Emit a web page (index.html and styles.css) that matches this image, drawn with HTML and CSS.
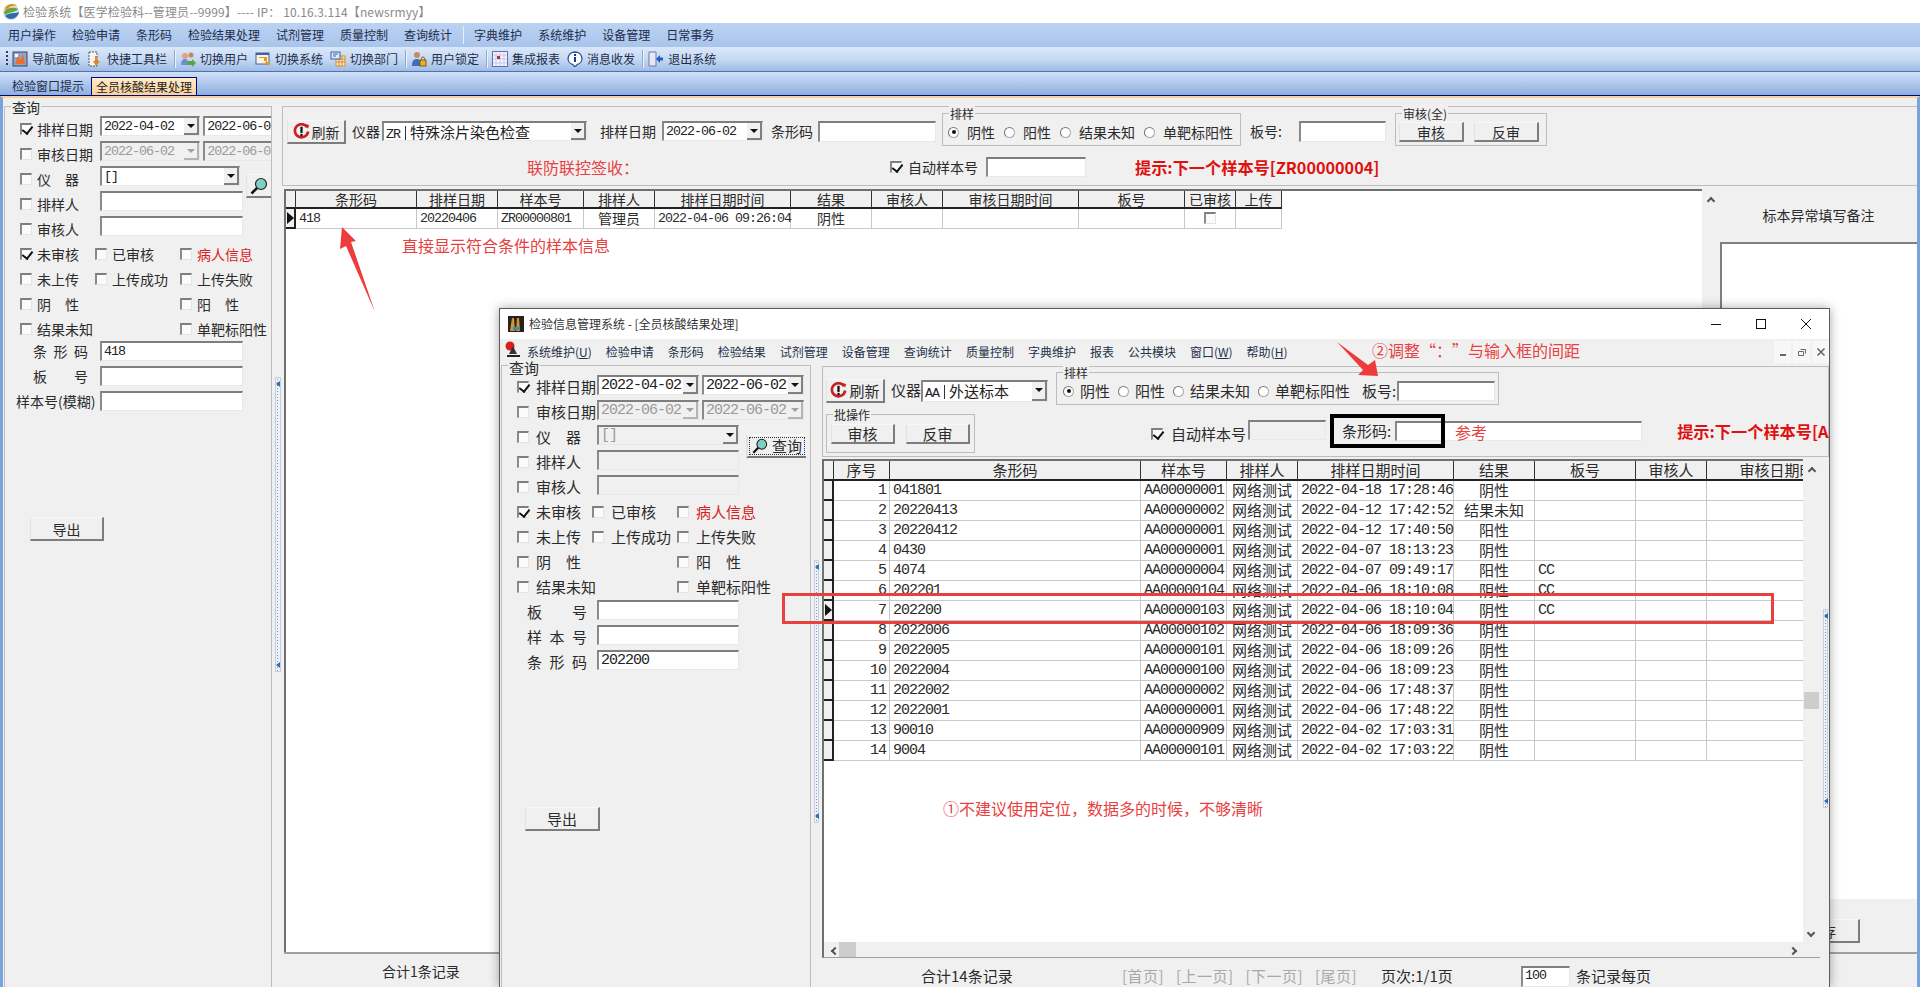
FILE: index.html
```html
<!DOCTYPE html>
<html lang="zh-CN">
<head>
<meta charset="utf-8">
<title>检验系统</title>
<link rel="stylesheet" href="styles.css">
</head>
<body>
<div class="app">
  <div class="titlebar">
    <svg class="logo" viewBox="0 0 18 18" width="18" height="18"><circle cx="9" cy="9" r="8" fill="#d9dee0"/><path d="M3 5C6 0 13 0 15 3 11 2 7 3 4 7z" fill="#e8891c"/><path d="M2 9C5 4 12 4 16 6 14 10 8 8 3 12z" fill="#6aa632"/><path d="M3 13C7 9 13 11 17 9 16 15 8 19 3 13z" fill="#2a6db5"/></svg>
    <span class="title-text">检验系统【医学检验科--管理员--9999】---- IP： 10.16.3.114【newsrmyy】</span>
  </div>
  <nav class="menubar">
    <span>用户操作</span><span>检验申请</span><span>条形码</span><span>检验结果处理</span><span>试剂管理</span><span>质量控制</span><span>查询统计</span><i class="menu-sep"></i><span>字典维护</span><span>系统维护</span><span>设备管理</span><span>日常事务</span>
  </nav>
  <div class="toolbar">
    <i class="grip"></i>
    <div class="tool"><svg viewBox="0 0 16 16" width="16" height="16"><rect x="1" y="1" width="14" height="14" fill="#8aa6d0" stroke="#445"/><path d="M3 13 6 4l2 5 3-6 2 10z" fill="#e8702a"/><rect x="3" y="3" width="3" height="3" fill="#fff"/></svg><span>导航面板</span></div>
    <div class="tool"><svg viewBox="0 0 16 16" width="16" height="16"><rect x="2" y="1" width="8" height="14" fill="#f5f5f5" stroke="#555" stroke-dasharray="2 1"/><path d="M10 5v5h3l-4 5-3-5h2V5z" fill="#e8841c"/></svg><span>快捷工具栏</span></div>
    <i class="tool-sep"></i>
    <div class="tool"><svg viewBox="0 0 16 16" width="16" height="16"><circle cx="5" cy="5" r="3" fill="#e3a27c"/><circle cx="11" cy="4" r="2.5" fill="#c8885c"/><path d="M1 14c0-5 2-6 4-6s4 2 4 6z" fill="#6f8fc8"/><path d="M8 10h4V8l4 4-4 4v-2H8z" fill="#5aa83a"/></svg><span>切换用户</span></div>
    <div class="tool"><svg viewBox="0 0 16 16" width="16" height="16"><rect x="1" y="2" width="13" height="11" fill="#fbf3e0" stroke="#3a64a8"/><rect x="1" y="2" width="13" height="2" fill="#3a64a8"/><path d="M4 7h5v3h2l-1 2 3 3 2-4h-3V6H4z" fill="#e89a1c"/></svg><span>切换系统</span></div>
    <div class="tool"><svg viewBox="0 0 16 16" width="16" height="16"><rect x="6" y="5" width="9" height="10" fill="#fbe9c8" stroke="#d88a2c"/><path d="M6 8h9M6 11h9M9 5v10M12 5v10" stroke="#d88a2c"/><rect x="1" y="1" width="9" height="7" fill="#dfeaf8" stroke="#3a64a8"/><path d="M3 3h5M3 5h3" stroke="#3a64a8"/></svg><span>切换部门</span></div>
    <i class="tool-sep"></i>
    <div class="tool"><svg viewBox="0 0 16 16" width="16" height="16"><circle cx="6" cy="4" r="3" fill="#c98a5c"/><path d="M1 15c0-6 2-7 5-7s5 2 5 7z" fill="#3f6fb5"/><rect x="9" y="9" width="6" height="6" fill="#e8b02c" stroke="#8a5a10"/><path d="M10.500 9V7.500a1.500 1.500 0 0 1 3 0V9" fill="none" stroke="#8a5a10"/></svg><span>用户锁定</span></div>
    <i class="tool-sep"></i>
    <div class="tool"><svg viewBox="0 0 16 16" width="16" height="16"><rect x=".5" y=".5" width="15" height="15" fill="#f4f4fb" stroke="#6a6ab8"/><path d="M1 4h14M1 8h14M1 12h14M4 1v14M8 1v14M12 1v14" stroke="#c8c8e8"/><rect x="5" y="5" width="3" height="3" fill="#b83030"/></svg><span>集成报表</span></div>
    <div class="tool"><svg viewBox="0 0 16 16" width="16" height="16"><path d="M8 1a7 6.500 0 0 1 2 12.700L8 16l-2-2.300A7 6.500 0 0 1 8 1z" fill="#fff" stroke="#2a50a0" stroke-width="1.300"/><rect x="7" y="6" width="2" height="5" fill="#123a90"/><rect x="7" y="3" width="2" height="2" fill="#123a90"/></svg><span>消息收发</span></div>
    <i class="tool-sep"></i>
    <div class="tool"><svg viewBox="0 0 16 16" width="16" height="16"><path d="M1 1h7v14H1z" fill="#e6e8f4" stroke="#6c7ab0"/><path d="M8 8l4-4v2.500h3v3h-3V12z" fill="#1f5fc8"/></svg><span>退出系统</span></div>
  </div>
  <div class="tabstrip">
    <div class="tab">检验窗口提示</div>
    <div class="tab tab-on">全员核酸结果处理</div>
  </div>

  <div class="workspace">
    <section class="group query">
      <span class="legend">查询</span>
      <div class="row"><i class="cb on"></i><span class="lab">排样日期</span><div class="sunk date"><span class="val">2022-04-02</span><i class="arrow"></i></div><div class="sunk date2 gap3"><span class="val">2022-06-02</span></div></div>
      <div class="row"><i class="cb"></i><span class="lab">审核日期</span><div class="sunk date off"><span class="val">2022-06-02</span><i class="arrow dim"></i></div><div class="sunk date2 gap3 off"><span class="val">2022-06-02</span></div></div>
      <div class="row"><i class="cb"></i><span class="lab"><span class="just">仪 器</span></span><div class="sunk wide"><span class="val">[]</span><i class="arrow"></i></div><div class="btn search"><svg viewBox="0 0 18 18" width="18" height="18"><circle cx="11" cy="7" r="5.500" fill="#7fd0c4" stroke="#222" stroke-width="1.200"/><path d="M7 11 1.500 16.500" stroke="#111" stroke-width="2.500"/></svg></div></div>
      <div class="row"><i class="cb"></i><span class="lab">排样人</span><div class="sunk wide"></div></div>
      <div class="row"><i class="cb"></i><span class="lab">审核人</span><div class="sunk wide"></div></div>
      <div class="row"><span class="cell-a"><i class="cb on"></i>未审核</span><span class="cell-b"><i class="cb"></i>已审核</span><span class="cell-c red"><i class="cb"></i>病人信息</span></div>
      <div class="row"><span class="cell-a"><i class="cb"></i>未上传</span><span class="cell-b"><i class="cb"></i>上传成功</span><span class="cell-c"><i class="cb"></i>上传失败</span></div>
      <div class="row"><span class="cell-ab"><i class="cb"></i><span class="just">阴 性</span></span><span class="cell-c"><i class="cb"></i><span class="just">阳 性</span></span></div>
      <div class="row"><span class="cell-ab"><i class="cb"></i>结果未知</span><span class="cell-c"><i class="cb"></i>单靶标阳性</span></div>
      <div class="row row-spaced"><span class="pre">条 形 码</span><div class="sunk wide"><span class="val">418</span></div></div>
      <div class="row row-spaced"><span class="pre">板 号</span><div class="sunk wide"></div></div>
      <div class="row row-spaced"><span class="pre-wide">样本号(模糊)</span><div class="sunk wide"></div></div>
      <div class="btn export">导出</div>
    </section>
    <div class="splitter"><div class="strip"><i class="tick"></i><i class="tick"></i></div></div>

    <div class="content">
      <div class="panel">
        <div class="bar bar-one">
          <div class="btn refresh"><svg viewBox="0 0 18 18" width="17" height="17"><path d="M15 4.500A7 7 0 1 0 16 9" fill="none" stroke="#cc1f1f" stroke-width="2.800"/><path d="M13 1l4 1-1 4z" fill="#cc1f1f"/><rect x="7.800" y="4" width="2.400" height="6.500" fill="#111"/><rect x="7.800" y="11.500" width="2.400" height="2.400" fill="#111"/></svg>刷新</div>
          <span class="t ml6 w28">仪器</span>
          <div class="sunk combo-ins ml2"><span class="val">ZR<em class="pipe"></em><b class="cjk">特殊涂片染色检查</b></span><i class="arrow"></i></div>
          <span class="t ml13">排样日期</span>
          <div class="sunk date ml6 slim"><span class="val">2022-06-02</span><i class="arrow"></i></div>
          <span class="t ml8">条形码</span>
          <div class="sunk barcode ml5"></div>
          <div class="group radios ml6">
            <span class="legend small">排样</span>
            <label><i class="radio on"></i>阴性</label><label><i class="radio"></i>阳性</label><label><i class="radio"></i>结果未知</label><label><i class="radio"></i>单靶标阳性</label>
          </div>
          <span class="t ml9">板号:</span>
          <div class="sunk plate ml17"></div>
          <div class="group actions ml9">
            <span class="legend small">审核(全)</span>
            <div class="btn act">审核</div><div class="btn act">反审</div>
          </div>
        </div>
        <div class="bar bar-two">
          <span class="note-inline">联防联控签收：</span>
          <span class="autobox"><i class="cb on"></i>自动样本号</span>
          <div class="sunk auto"></div>
          <span class="hint">提示:下一个样本号[ZR00000004]</span>
        </div>
      </div>
      <div class="grid-row">
        <div class="grid">
          <table class="tbl tbl-main">
            <colgroup><col><col><col><col><col><col><col><col><col><col><col><col></colgroup>
            <thead><tr><th></th><th>条形码</th><th>排样日期</th><th>样本号</th><th>排样人</th><th>排样日期时间</th><th>结果</th><th>审核人</th><th>审核日期时间</th><th>板号</th><th>已审核</th><th>上传</th></tr></thead>
            <tbody><tr><td class="ind cur"></td><td class="m">418</td><td class="m">20220406</td><td class="m">ZR00000801</td><td class="c">管理员</td><td class="m">2022-04-06 09:26:04</td><td class="c">阴性</td><td></td><td></td><td></td><td class="c"><i class="cb plain"></i></td><td></td></tr></tbody>
          </table>
        </div>
        <div class="vbar"><i class="chev up"></i></div>
        <aside class="remark">
          <div class="remark-head">标本异常填写备注</div>
          <div class="remark-body"></div>
          <div class="remark-foot"><div class="btn save">保存</div></div>
        </aside>
      </div>
      <div class="status">合计1条记录</div>
    </div>
  </div>
</div>

<div class="win">
  <div class="win-title">
    <svg viewBox="0 0 16 16" width="16" height="16"><rect width="16" height="16" fill="#2c2118"/><path d="M2 15 4 2h2l1 13zM8 15l1-13h2l1 13z" fill="#c9973a"/><rect x="5" y="11" width="7" height="3" fill="#3f8fa8"/></svg>
    <span>检验信息管理系统 - [全员核酸结果处理]</span>
    <div class="win-ctrls">
      <svg viewBox="0 0 12 12" width="12" height="12"><path d="M1 6.500h10" stroke="#111"/></svg>
      <svg viewBox="0 0 12 12" width="12" height="12"><rect x="1.500" y="1.500" width="9" height="9" fill="none" stroke="#111"/></svg>
      <svg viewBox="0 0 12 12" width="12" height="12"><path d="M1 1l10 10M11 1 1 11" stroke="#111"/></svg>
    </div>
  </div>
  <nav class="win-menu">
    <svg class="menu-icon" viewBox="0 0 16 18" width="16" height="18"><circle cx="5" cy="6" r="4.500" fill="#d81e1e"/><path d="M4 14 8 6l4 8z" fill="#333"/><rect x="2" y="15" width="13" height="2" fill="#222"/></svg>
    <span class="first">系统维护(<u>U</u>)</span><span>检验申请</span><span>条形码</span><span>检验结果</span><span>试剂管理</span><span>设备管理</span><span>查询统计</span><span>质量控制</span><span>字典维护</span><span>报表</span><span>公共模块</span><span>窗口(<u>W</u>)</span><span>帮助(<u>H</u>)</span>
    <div class="mdi">
      <i class="mdi-btn"><svg viewBox="0 0 10 10" width="10" height="10"><rect x="2" y="7" width="6" height="2" fill="#667"/></svg></i>
      <i class="mdi-btn"><svg viewBox="0 0 10 10" width="10" height="10"><path d="M3.500 2.500h5v4M1.500 4.500h5v4h-5z" fill="none" stroke="#667"/></svg></i>
      <i class="mdi-btn"><svg viewBox="0 0 10 10" width="10" height="10"><path d="M1.500 1.500l7 7M8.500 1.500l-7 7" stroke="#667" stroke-width="1.600"/></svg></i>
    </div>
  </nav>
  <div class="win-body">
    <section class="group query sub-query">
      <span class="legend">查询</span>
      <div class="row"><i class="cb on"></i><span class="lab">排样日期</span><div class="sunk date"><span class="val">2022-04-02</span><i class="arrow"></i></div><div class="sunk date gap3"><span class="val">2022-06-02</span><i class="arrow"></i></div></div>
      <div class="row"><i class="cb"></i><span class="lab">审核日期</span><div class="sunk date off"><span class="val">2022-06-02</span><i class="arrow dim"></i></div><div class="sunk date gap3 off"><span class="val">2022-06-02</span><i class="arrow dim"></i></div></div>
      <div class="row"><i class="cb"></i><span class="lab"><span class="just">仪 器</span></span><div class="sunk wide off"><span class="val">[]</span><i class="arrow"></i></div><div class="btn search query-btn"><span class="focus"><svg viewBox="0 0 18 18" width="16" height="16"><circle cx="11" cy="7" r="5.500" fill="#7fd0c4" stroke="#222" stroke-width="1.200"/><path d="M7 11 1.500 16.500" stroke="#111" stroke-width="2.500"/></svg>查询</span></div></div>
      <div class="row"><i class="cb"></i><span class="lab">排样人</span><div class="sunk wide off"></div></div>
      <div class="row"><i class="cb"></i><span class="lab">审核人</span><div class="sunk wide off"></div></div>
      <div class="row"><span class="cell-a"><i class="cb on"></i>未审核</span><span class="cell-b"><i class="cb"></i>已审核</span><span class="cell-c red"><i class="cb"></i>病人信息</span></div>
      <div class="row"><span class="cell-a"><i class="cb"></i>未上传</span><span class="cell-b"><i class="cb"></i>上传成功</span><span class="cell-c"><i class="cb"></i>上传失败</span></div>
      <div class="row"><span class="cell-ab"><i class="cb"></i><span class="just">阴 性</span></span><span class="cell-c"><i class="cb"></i><span class="just">阳 性</span></span></div>
      <div class="row"><span class="cell-ab"><i class="cb"></i>结果未知</span><span class="cell-c"><i class="cb"></i>单靶标阳性</span></div>
      <div class="row row-spaced"><span class="pre">板 号</span><div class="sunk wide"></div></div>
      <div class="row row-spaced"><span class="pre">样 本 号</span><div class="sunk wide"></div></div>
      <div class="row row-spaced"><span class="pre">条 形 码</span><div class="sunk wide"><span class="val">202200</span></div></div>
      <div class="btn export">导出</div>
    </section>
    <div class="splitter sub-splitter"><div class="strip"><i class="tick"></i><i class="tick"></i></div></div>
    <div class="content sub-content">
      <div class="panel sub-panel">
        <div class="bar bar-one">
          <div class="btn refresh"><svg viewBox="0 0 18 18" width="17" height="17"><path d="M15 4.500A7 7 0 1 0 16 9" fill="none" stroke="#cc1f1f" stroke-width="2.800"/><path d="M13 1l4 1-1 4z" fill="#cc1f1f"/><rect x="7.800" y="4" width="2.400" height="6.500" fill="#111"/><rect x="7.800" y="11.500" width="2.400" height="2.400" fill="#111"/></svg>刷新</div>
          <span class="t ml6 w30">仪器</span>
          <div class="sunk combo-aa"><span class="val">AA<em class="pipe"></em><b class="cjk">外送标本</b></span><i class="arrow"></i></div>
          <div class="group radios sub-radios ml8">
            <span class="legend small">排样</span>
            <label><i class="radio on"></i>阴性</label><label><i class="radio"></i>阳性</label><label><i class="radio"></i>结果未知</label><label><i class="radio"></i>单靶标阳性</label>
            <span class="plate-label">板号:</span>
            <div class="sunk plate-in"></div>
          </div>
        </div>
        <div class="bar bar-batch">
          <div class="group batch">
            <span class="legend small">批操作</span>
            <div class="btn act">审核</div><div class="btn act">反审</div>
          </div>
          <span class="autobox"><i class="cb on"></i>自动样本号</span>
          <div class="sunk auto off"></div>
          <span class="t bc-label">条形码:</span>
          <div class="sunk bc-in"></div>
          <span class="hint">提示:下一个样本号[AA00000002]</span>
        </div>
      </div>
      <div class="grid-row">
        <div class="grid-wrap">
          <div class="grid-main">
            <div class="grid">
              <table class="tbl tbl-sub">
                <colgroup><col><col><col><col><col><col><col><col><col><col></colgroup>
                <thead><tr><th></th><th>序号</th><th>条形码</th><th>样本号</th><th>排样人</th><th>排样日期时间</th><th>结果</th><th>板号</th><th>审核人</th><th>审核日期时间</th></tr></thead>
                <tbody>
                  <tr><td class="ind"></td><td class="n">1</td><td class="m">041801</td><td class="m">AA00000001</td><td class="c">网络测试</td><td class="m">2022-04-18 17:28:46</td><td class="c">阴性</td><td></td><td></td><td></td></tr>
                  <tr><td class="ind"></td><td class="n">2</td><td class="m">20220413</td><td class="m">AA00000002</td><td class="c">网络测试</td><td class="m">2022-04-12 17:42:52</td><td class="c">结果未知</td><td></td><td></td><td></td></tr>
                  <tr><td class="ind"></td><td class="n">3</td><td class="m">20220412</td><td class="m">AA00000001</td><td class="c">网络测试</td><td class="m">2022-04-12 17:40:50</td><td class="c">阳性</td><td></td><td></td><td></td></tr>
                  <tr><td class="ind"></td><td class="n">4</td><td class="m">0430</td><td class="m">AA00000001</td><td class="c">网络测试</td><td class="m">2022-04-07 18:13:23</td><td class="c">阴性</td><td></td><td></td><td></td></tr>
                  <tr><td class="ind"></td><td class="n">5</td><td class="m">4074</td><td class="m">AA00000004</td><td class="c">网络测试</td><td class="m">2022-04-07 09:49:17</td><td class="c">阳性</td><td class="m">CC</td><td></td><td></td></tr>
                  <tr><td class="ind"></td><td class="n">6</td><td class="m">202201</td><td class="m">AA00000104</td><td class="c">网络测试</td><td class="m">2022-04-06 18:10:08</td><td class="c">阴性</td><td class="m">CC</td><td></td><td></td></tr>
                  <tr><td class="ind cur"></td><td class="n">7</td><td class="m">202200</td><td class="m">AA00000103</td><td class="c">网络测试</td><td class="m">2022-04-06 18:10:04</td><td class="c">阴性</td><td class="m">CC</td><td></td><td></td></tr>
                  <tr><td class="ind"></td><td class="n">8</td><td class="m">2022006</td><td class="m">AA00000102</td><td class="c">网络测试</td><td class="m">2022-04-06 18:09:36</td><td class="c">阴性</td><td></td><td></td><td></td></tr>
                  <tr><td class="ind"></td><td class="n">9</td><td class="m">2022005</td><td class="m">AA00000101</td><td class="c">网络测试</td><td class="m">2022-04-06 18:09:26</td><td class="c">阴性</td><td></td><td></td><td></td></tr>
                  <tr><td class="ind"></td><td class="n">10</td><td class="m">2022004</td><td class="m">AA00000100</td><td class="c">网络测试</td><td class="m">2022-04-06 18:09:23</td><td class="c">阴性</td><td></td><td></td><td></td></tr>
                  <tr><td class="ind"></td><td class="n">11</td><td class="m">2022002</td><td class="m">AA00000002</td><td class="c">网络测试</td><td class="m">2022-04-06 17:48:37</td><td class="c">阴性</td><td></td><td></td><td></td></tr>
                  <tr><td class="ind"></td><td class="n">12</td><td class="m">2022001</td><td class="m">AA00000001</td><td class="c">网络测试</td><td class="m">2022-04-06 17:48:22</td><td class="c">阴性</td><td></td><td></td><td></td></tr>
                  <tr><td class="ind"></td><td class="n">13</td><td class="m">90010</td><td class="m">AA00000909</td><td class="c">网络测试</td><td class="m">2022-04-02 17:03:31</td><td class="c">阴性</td><td></td><td></td><td></td></tr>
                  <tr><td class="ind"></td><td class="n">14</td><td class="m">9004</td><td class="m">AA00000101</td><td class="c">网络测试</td><td class="m">2022-04-02 17:03:22</td><td class="c">阴性</td><td></td><td></td><td></td></tr>
                </tbody>
              </table>
            </div>
            <div class="vbar sub-vbar"><i class="chev up"></i><i class="thumb-v"></i><i class="chev down"></i></div>
          </div>
          <div class="hbar"><i class="chev left"></i><i class="thumb-h"></i><i class="chev right"></i></div>
        </div>
        <div class="splitter right-splitter"><div class="strip"><i class="tick"></i><i class="tick"></i></div></div>
      </div>
      <div class="status sub-status">
        <span class="total">合计14条记录</span>
        <span class="pager">[首页] [上一页] [下一页] [尾页]</span>
        <span class="pageno">页次:1/1页</span>
        <div class="sunk perpage"><span class="val">100</span></div>
        <span class="perlabel">条记录每页</span>
      </div>
    </div>
  </div>
</div>

<svg class="mark" viewBox="0 0 1920 987" width="1920" height="987">
  <polygon points="342,227 356,241 351,242 375,312 346,246 340,249" fill="#ee3b3b"/>
  <polygon points="1337,342 1368,365 1375,360 1378,376 1358,375 1363,370" fill="#ee3b3b"/>
</svg>
<div class="redbox"></div>
<div class="blackbox"></div>
<span class="note n-direct">直接显示符合条件的样本信息</span>
<span class="note n-gap">②调整“：”与输入框的间距</span>
<span class="note n-ref">参考</span>
<span class="note n-pos">①不建议使用定位，数据多的时候，不够清晰</span>
</body>
</html>
```
FILE: styles.css
```css
* { box-sizing: border-box; }
html, body { margin: 0; height: 100%; overflow: hidden; }
body {
  position: relative;
  width: 1920px;
  height: 987px;
  background: #f0f0f0;
  color: #2b2b2b;
  font: 14px/20px "Noto Sans CJK SC", "Liberation Sans", sans-serif;
  text-spacing-trim: space-all;
}
i, em, b { font-style: normal; font-weight: normal; }

/* ---------- main window chrome ---------- */
.app { display: flex; flex-direction: column; height: 987px; }
.titlebar {
  display: flex; align-items: center; gap: 3px;
  height: 23px; padding-left: 2px;
  background: #fff; color: #8a8a8a; font-size: 12px;
}
.title-text { letter-spacing: .12px; }
.menubar {
  display: flex; align-items: center; gap: 16px;
  height: 24px; padding-left: 8px;
  background: linear-gradient(#bcd2f1, #a9c4ec);
  color: #1d2c4c; font-size: 12px;
}
.menu-sep { width: 1px; height: 18px; margin: 0 -6px 0 -5px; background: #e6eefa; }
.toolbar {
  display: flex; align-items: center; gap: 7px;
  height: 25px; padding-left: 6px;
  background: linear-gradient(#dbe8fa, #c4d7f2 55%, #9fbbe6);
  border-bottom: 1px solid #4f74ad;
  color: #1d2c4c; font-size: 12px;
}
.grip { width: 2px; height: 16px; margin-right: -3px; background: repeating-linear-gradient(#2b3f66 0 2px, transparent 2px 4px); }
.tool { display: flex; align-items: center; gap: 4px; }
.tool-sep { width: 1px; height: 18px; margin-right: -2px; background: #8fa8cf; box-shadow: 1px 0 #eef4fd; }
.tabstrip {
  display: flex; align-items: flex-end;
  height: 24px; padding-left: 2px;
  background: linear-gradient(#d0e0f8, #8fafdf);
  border-bottom: 1px solid #000c6e;
  font-size: 12px; color: #1d2c4c;
}
.tab { height: 18px; padding: 0 7px 0 10px; line-height: 18px; }
.tab-on {
  padding: 0 4px;
  background: linear-gradient(#ffeccd, #fdd198);
  border: 1px solid #000c6e; border-bottom: 0;
  color: #222; line-height: 17px;
}
.workspace {
  display: flex; flex: 1; min-height: 0;
  border-top: 2px solid #f4d2a4;
  border-left: 3px solid #7aa3dd; border-right: 3px solid #7aa3dd;
}

/* ---------- shared controls ---------- */
.group { position: relative; border: 1px solid #bdbdbd; }
.legend {
  position: absolute; top: -8px; left: 6px;
  padding: 0 1px; background: #f0f0f0; line-height: 16px;
}
.legend.small { top: -8px; font-size: 12px; }
.sunk {
  display: flex; height: 20px; overflow: hidden;
  background: #fff; color: #222;
  border-style: solid; border-width: 2px 1px 1px 2px;
  border-color: #7e7e7e #e8e8e8 #e8e8e8 #8a8a8a;
  font: 13.33px/17px "Liberation Mono", "Noto Sans CJK SC", monospace;
  letter-spacing: -1px;
}
.sunk .val { flex: 1; min-width: 0; padding-left: 2px; white-space: nowrap; }
.sunk.off { background: #f0f0f0; color: #9a9a9a; }
.arrow {
  position: relative; flex: none; width: 15px;
  background: #f0f0f0;
  border-right: 2px solid #808080; border-bottom: 2px solid #808080;
}
.arrow::after {
  content: ""; position: absolute; left: 3px; top: 6px;
  border: 4px solid transparent; border-top: 4px solid #111; border-bottom: 0;
}
.arrow.dim { border-color: #b4b4b4; }
.arrow.dim::after { border-top-color: #a0a0a0; }
.btn {
  display: flex; align-items: center; justify-content: center;
  background: #f0f0f0;
  border-style: solid; border-width: 1px 2px 2px 1px;
  border-color: #f7f7f7 #7d7d7d #7d7d7d #e2e2e2;
}
.cb {
  display: inline-block; position: relative; flex: none;
  width: 12px; height: 12px; margin-right: 5px;
  background: #fbfbfb;
  border-style: solid; border-width: 2px 1px 1px 2px;
  border-color: #7e7e7e #e4e4e4 #e4e4e4 #8a8a8a;
}
.cb.on::after {
  content: ""; position: absolute; left: 2px; top: -1px;
  width: 5px; height: 8px;
  border: solid #111; border-width: 0 2px 2px 0;
  transform: rotate(38deg);
}
.radio {
  display: inline-block; position: relative; flex: none;
  width: 11px; height: 11px; margin-right: 8px;
  border-radius: 50%; background: #fff;
  border: 1px solid #a8a8a8; border-left-color: #777; border-top-color: #777;
}
.radio.on::after {
  content: ""; position: absolute; left: 2.500px; top: 2.500px;
  width: 4px; height: 4px; border-radius: 50%; background: #111;
}
.red { color: #d81e1e; }
.just { display: inline-block; width: 42px; text-align-last: justify; }

/* ---------- query form ---------- */
.query {
  flex: none; width: 268px; margin: 8px 0 0 1px;
  padding: 9px 0 0 15px;
  border-bottom: 0;
  font-size: 14px;
}
.row { display: flex; align-items: center; height: 25px; white-space: nowrap; }
.row > .sunk { margin-top: -5px; }
.lab { width: 63px; flex: none; }
.cell-a, .cell-b, .cell-c, .cell-ab { display: flex; align-items: center; flex: none; }
.cell-a { width: 75px; }
.cell-b { width: 85px; }
.cell-ab { width: 160px; }
.date { width: 102px; }
.date2 { width: 69px; border-right: 0; }
.gap3 { margin-left: 3px; }
.wide { width: 143px; }
.search { flex: none; align-self: flex-start; width: 25px; height: 24px; margin: 8px 0 0 6px; border-right: 0; }
.row-spaced .pre {
  width: 55px; margin: 0 12px 0 13px; margin-top: -5px;
  text-align-last: justify; flex: none;
}
.row-spaced .pre-wide { width: 84px; margin: -5px 0 0 -4px; flex: none; }
.export { width: 74px; height: 24px; margin: 101px 0 0 10px; }

.splitter { flex: none; width: 6px; margin: 0 1px 0 3px; }
.strip {
  display: flex; flex-direction: column; justify-content: space-between; align-items: center;
  height: 295px; margin-top: 279px; padding: 3px 0;
  background: #eef3fa radial-gradient(#7e93b5 .6px, transparent .8px) 0 0 / 3px 3px;
  border: 1px solid #c5cfdd;
}
.tick { width: 0; height: 0; border: 3px solid transparent; border-right: 4px solid #2d6fb0; border-left: 0; }

/* ---------- content ---------- */
.content { display: flex; flex-direction: column; flex: 1; min-width: 0; }
.panel {
  flex: none; height: 80px; margin-top: 8px;
  border: 1px solid #bdbdbd; border-right: 0;
  padding: 6px 0 0 4px;
}
.bar { display: flex; align-items: flex-start; white-space: nowrap; }
.bar-one { height: 33px; }
.bar .t { margin-top: 8px; flex: none; }
.bar > .sunk { margin-top: 8px; flex: none; }
.refresh { width: 59px; height: 24px; margin-top: 7px; gap: 2px; flex: none; }
.ml2 { margin-left: 2px; } .ml5 { margin-left: 5px !important; } .ml6 { margin-left: 6px; }
.ml7 { margin-left: 7px; } .ml8 { margin-left: 8px; } .ml9 { margin-left: 9px; }
.ml11 { margin-left: 11px; } .ml13 { margin-left: 13px; } .ml17 { margin-left: 17px; }
.w28 { width: 28px; } .w30 { width: 30px; }
.combo-ins { width: 205px; }
.date.slim { width: 101px; }
.barcode { width: 118px; height: 21px; }
.plate { width: 87px; height: 21px; }
.pipe { display: inline-block; width: 1px; height: 14px; margin: 0 4px 0 5px; background: #333; vertical-align: -2px; }
.cjk { font: 15px/17px "Noto Sans CJK SC", sans-serif; letter-spacing: 0; }
.radios {
  display: flex; align-items: center; gap: 9px; flex: none;
  width: 299px; height: 33px; padding: 5px 0 0 5px;
}
.radios label { display: flex; align-items: center; }
.actions {
  display: flex; gap: 10px; flex: none;
  width: 152px; height: 33px; padding: 8px 0 0 3px;
}
.act { width: 65px; height: 20px; }
.bar-two { height: 20px; margin-top: 11px; align-items: center; }
.note-inline { margin-left: 240px; width: 113px; font-size: 16px; color: #e8403f; flex: none; }
.autobox { display: flex; align-items: center; margin-left: 250px; flex: none; }
.autobox .cb { margin-right: 6px; }
.auto { width: 100px; margin: 0 0 0 8px !important; }
.hint {
  margin-left: 49px; flex: none;
  color: #e01010; font: bold 16.2px/20px "Noto Sans CJK SC", sans-serif;
}

/* ---------- grid ---------- */
.grid-row { display: flex; flex: none; height: 763px; margin-top: 3px; }
.grid {
  flex: none; width: 1418px; margin-left: 2px; overflow: hidden;
  background: #fff;
  border-top: 2px solid #707070; border-left: 2px solid #707070;
}
.tbl { table-layout: fixed; border-collapse: separate; border-spacing: 0; width: 0; background: #fff; }
.tbl th {
  height: 18px; padding: 0;
  background: #f0f0f0; font-weight: normal; line-height: 16px; white-space: nowrap;
  border-right: 1px solid #333; border-bottom: 2px solid #222;
}
.tbl td {
  height: 19px; padding: 0; white-space: nowrap; line-height: 16px;
  border-right: 1px solid #c8c8c8; border-bottom: 1px solid #c8c8c8;
}
.tbl .m { padding-left: 3px; font: 13.33px/16px "Liberation Mono", monospace; letter-spacing: -1px; }
.tbl .c { padding-bottom: 2px; text-align: center; }
.tbl .n { padding-right: 3px; text-align: right; font: 15px/16px "Liberation Mono", monospace; letter-spacing: -1px; }
.tbl .ind {
  position: relative; background: #f0f0f0;
  border-right: 2px solid #222; border-bottom: 2px solid #222;
}
.tbl .cur::after {
  content: ""; position: absolute; left: 1px; top: 3px;
  border: 6px solid transparent; border-left: 7px solid #111; border-right: 0;
}
.cb.plain { margin: 3px 0 0; }
.tbl-main col:nth-child(1) { width: 10px; }
.tbl-main col:nth-child(2) { width: 121px; }
.tbl-main col:nth-child(3) { width: 81px; }
.tbl-main col:nth-child(4) { width: 86px; }
.tbl-main col:nth-child(5) { width: 71px; }
.tbl-main col:nth-child(6) { width: 136px; }
.tbl-main col:nth-child(7) { width: 81px; }
.tbl-main col:nth-child(8) { width: 71px; }
.tbl-main col:nth-child(9) { width: 136px; }
.tbl-main col:nth-child(10) { width: 106px; }
.tbl-main col:nth-child(11) { width: 51px; }
.tbl-main col:nth-child(12) { width: 46px; }
.vbar {
  position: relative; flex: none; width: 18px;
  background: #f0f0f0;
}
.chev { position: absolute; width: 6px; height: 6px; border: solid #555; border-width: 2px 0 0 2px; }
.chev.up { left: 6px; top: 9px; transform: rotate(45deg); }
.chev.down { left: 5px; bottom: 6px; transform: rotate(225deg); }
.chev.left { left: 8px; top: 6px; transform: rotate(-45deg); }
.chev.right { right: 6px; top: 6px; transform: rotate(135deg); }
.remark { display: flex; flex-direction: column; flex: 1; margin-top: 1px; }
.remark-head { height: 52px; padding-top: 15px; text-align: center; flex: none; }
.remark-body {
  height: 657px; flex: none; background: #fff;
  border-top: 2px solid #808080; border-left: 2px solid #808080;
}
.remark-foot { display: flex; justify-content: flex-end; flex: 1; padding: 20px 57px 0 0; }
.save { width: 75px; height: 24px; }
.status {
  flex: 1; padding: 7px 0 0 98px;
  border-top: 2px solid #a0a0a0; margin-left: 2px; line-height: 20px;
}

/* ---------- child window ---------- */
.win {
  position: absolute; left: 499px; top: 308px;
  display: flex; flex-direction: column;
  width: 1331px; height: 679px; overflow: hidden;
  background: #f0f0f0;
  border: 1px solid #5c5c5c; border-bottom: 0;
  box-shadow: 0 0 10px rgba(0, 0, 0, .35);
  font-size: 15px;
}
.win-title {
  display: flex; align-items: center; gap: 5px; flex: none;
  height: 30px; padding-left: 8px;
  background: #fff; color: #333; font-size: 12px;
}
.win-ctrls { display: flex; gap: 33px; margin-left: auto; padding-right: 17px; }
.win-menu {
  display: flex; align-items: center; gap: 14px; flex: none;
  height: 26px; padding-left: 5px;
  font-size: 12px; color: #24304a;
}
.menu-icon { margin: -6px -8px 0 0; }
.win-menu .first { margin-left: 0; }
.mdi { display: flex; gap: 2px; margin-left: auto; }
.mdi-btn {
  display: flex; align-items: center; justify-content: center;
  width: 17px; height: 22px; background: #f7f7f7;
}
.win-body { display: flex; flex: 1; min-height: 0; }
.sub-query { width: 310px; margin: 0 0 0 1px; padding: 8px 0 0 15px; font-size: 15px; border-top: 1px solid #bdbdbd; }
.sub-query .legend { top: -6px; }
.sub-query .sunk { font: 15px/17px "Liberation Mono", "Noto Sans CJK SC", monospace; letter-spacing: -1px; }
.sub-query .row > .sunk { margin-top: -3px; }
.sub-query .cb { margin-right: 7px; }
.sub-query .lab { width: 61px; }
.sub-query .just { width: 45px; }
.sub-query .cell-c .cb { margin-right: 7px; }
.sub-query .row-spaced .pre { width: 60px; margin: 0 10px; }
.sub-query .date { width: 102px; }
.sub-query .wide { width: 142px; }
.sub-query .query-btn {
  width: 60px; margin: 10px 0 0 7px;
  border-width: 2px; border-color: #f7f7f7 #777 #777 #e2e2e2;
}
.focus { display: flex; align-items: center; gap: 4px; padding: 0 2px; border: 1px dotted #333; line-height: 16px; }
.sub-query .export { width: 75px; margin: 133px 0 0 8px; }
.sub-splitter { width: 5px; margin: 0 3px; }
.sub-splitter .strip { height: 263px; margin-top: 195px; }
.sub-content { min-width: 0; }
.sub-panel { height: 91px; margin-top: 1px; padding: 5px 0 0 3px; border-right: 1px solid #bdbdbd; }
.sub-panel .t { margin-top: 8px; }
.combo-aa { width: 127px; height: 22px; }
.sub-radios { width: 443px; gap: 8px; padding-left: 6px; font-size: 15px; }
.sub-radios .radio { margin-right: 6px; }
.plate-label { width: 30px; margin-left: 4px; flex: none; }
.plate-in { width: 98px; height: 20px; margin: -1px 0 0 -3px; flex: none; }
.bar-batch { height: 39px; margin-top: 9px; }
.batch { display: flex; gap: 11px; flex: none; width: 149px; height: 39px; padding: 9px 0 0 4px; }
.batch .act { width: 64px; }
.sub-panel .autobox { margin: 10px 0 0 176px; }
.sub-panel .autobox .cb { margin-right: 8px; }
.sub-panel .auto { width: 78px; margin: 6px 0 0 2px !important; }
.bc-label { margin: 7px 0 0 16px !important; }
.bc-in { width: 247px; margin: 7px 0 0 4px !important; }
.sub-panel .hint { margin: 7px 0 0 35px; }
.sub-content .grid-row { height: 499px; margin-top: 2px; }
.grid-wrap { display: flex; flex-direction: column; flex: none; width: 998px; }
.grid-main { display: flex; flex: 1; min-height: 0; }
.grid-main .grid { flex: 1; width: auto; margin: 0; border-left-width: 2px; }
.sub-vbar { width: 17px; }
.thumb-v { position: absolute; left: 1px; top: 233px; width: 15px; height: 17px; background: #cdcdcd; }
.hbar { position: relative; flex: none; height: 16px; background: #f0f0f0; border-left: 2px solid #707070; border-bottom: 1px solid #a0a0a0; }
.thumb-h { position: absolute; left: 15px; top: 0; width: 17px; height: 15px; background: #cdcdcd; }
.hbar .chev.right { right: 24px; }
.right-splitter { width: 5px; margin: 0 0 0 3px; }
.right-splitter .strip { height: 199px; margin-top: 150px; }
.tbl-sub { font-size: 15px; }
.tbl-sub th { height: 20px; }
.tbl-sub td { height: 20px; }
.tbl-sub .m { font-size: 15px; }
.tbl-sub col:nth-child(1) { width: 10px; }
.tbl-sub col:nth-child(2) { width: 56px; }
.tbl-sub col:nth-child(3) { width: 251px; }
.tbl-sub col:nth-child(4) { width: 86px; }
.tbl-sub col:nth-child(5) { width: 71px; }
.tbl-sub col:nth-child(6) { width: 156px; }
.tbl-sub col:nth-child(7) { width: 81px; }
.tbl-sub col:nth-child(8) { width: 101px; }
.tbl-sub col:nth-child(9) { width: 71px; }
.tbl-sub col:nth-child(10) { width: 156px; }
.sub-status {
  display: flex; align-items: flex-start; border: 0; margin: 0;
  padding: 8px 0 0 99px; white-space: nowrap;
}
.sub-status .total { width: 201px; flex: none; }
.pager { width: 259px; flex: none; color: #a8a8a8; word-spacing: 8px; letter-spacing: .5px; }
.pageno { width: 140px; flex: none; }
.perpage { width: 49px; height: 21px; flex: none; }
.perpage .val { line-height: 16px; }
.perlabel { margin-left: 6px; }

/* ---------- review marks drawn over the screenshot ---------- */
.mark { position: absolute; left: 0; top: 0; pointer-events: none; }
.redbox { position: absolute; left: 782px; top: 593px; width: 992px; height: 31px; border: 3px solid #e8403f; }
.blackbox { position: absolute; left: 1330px; top: 414px; width: 115px; height: 34px; border: 4px solid #000; }
.note { position: absolute; font-size: 16px; line-height: 22px; color: #e8403f; white-space: nowrap; }
.n-direct { left: 402px; top: 234px; }
.n-gap { left: 1372px; top: 339px; }
.n-ref { left: 1455px; top: 421px; }
.n-pos { left: 943px; top: 797px; }
```
